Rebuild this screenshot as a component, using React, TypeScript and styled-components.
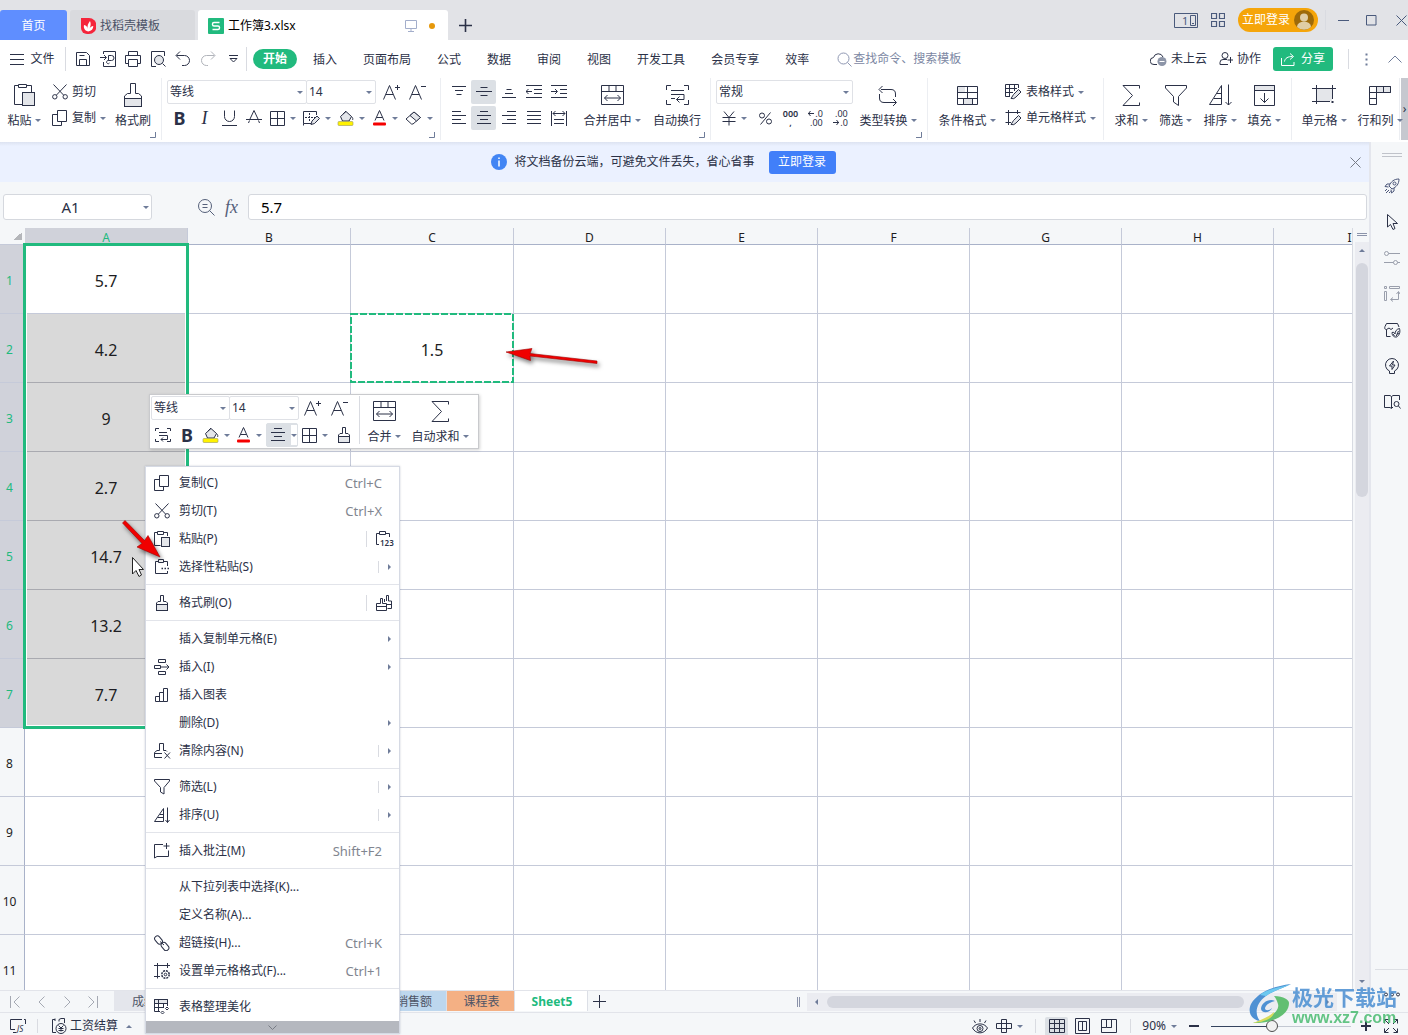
import React from "react";
import styled, { createGlobalStyle, css } from "styled-components";

const sans = '"Noto Sans", "Noto Sans CJK SC", sans-serif';
const ink = "#2b3147";
const muted = "#6f7c99";
const green = "#21ba7e";
const panel = "#f5f7f9";
const shade = "#e4e6ea";
const line = "#e2e4ea";

const GlobalStyle = createGlobalStyle`
  *, *::before, *::after { box-sizing: border-box; }
  body { margin: 0; overflow: hidden; }
  body, button, input, select {
    font: 12px/16px ${sans};
    color: ${ink};
  }
  button, input, select { margin: 0; padding: 0; border: 0; background: none; outline: 0; }
  button { display: inline-flex; align-items: center; justify-content: center; white-space: nowrap; flex: none; }
  svg { flex: none; display: block; }
`;

/* ---------- icons ---------- */

type Drawing = [number, number, React.ReactNode];

const gridLines = <path d="M.5 .5H14.5V14.5H.5ZM7.5 .5V14.5M.5 7.5H14.5" />;

const icons: Record<string, Drawing> = {
  burger: [14, 12, <path d="M0 1.5H14M0 6.5H14M0 11.5H14" />],
  save: [16, 16, <path d="M1.5 1.5H11.5L14.5 4.5V14.5H1.5ZM4.5 14.5V8.5H11.5V14.5M4.5 4.5H9.5" />],
  exportPdf: [16, 16, <path d="M3.5 3V.5H15.5V15.5H3.5V11M0 6.5H6M4 4L6.5 6.5L4 9M8.5 4.5H11.5A2 2 0 0 1 11.5 9.5H8.5ZM8.5 9.5A1.6 1.6 0 1 0 9.5 12" />],
  print: [16, 16, <path d="M3.5 4V.5H12.5V4M3.5 12.5H.5V4.5H15.5V12.5H12.5M3.5 8.5H12.5V15.5H3.5Z" />],
  preview: [16, 16, <><path d="M6 15.5H1.5V.5H14.5V5M12.5 12.5L15.5 15.5" /><circle cx="9" cy="9" r="4.5" fill={shade} /></>],
  undo: [16, 16, <path d="M5 .5L1 4.5L5 8.5M1.5 4.5H9.5A5 5 0 0 1 9.5 14.5H7" />],
  redo: [16, 16, <path d="M11 .5L15 4.5L11 8.5M14.5 4.5H6.5A5 5 0 0 0 6.5 14.5H8" />],
  quickMore: [9, 8, <path d="M0 .5H9M1 3.5L4.5 7L8 3.5Z" />],
  search: [15, 15, <><circle cx="6.5" cy="6.5" r="5.5" /><path d="M10.5 10.5L14.5 14.5" /></>],
  cloud: [17, 14, <><path d="M7 12.5H4A3.5 3.5 0 0 1 3.5 5.5A5 5 0 0 1 13 5" /><circle cx="12" cy="9.5" r="4.5" fill="#8d95a8" stroke="none" /><path d="M9.5 9.5H14.5" stroke="#fff" /></>],
  coop: [14, 14, <><circle cx="6" cy="3.5" r="3" /><path d="M8 7.5H4A3 3 0 0 0 1 10.5V12.5H9M11.5 5V11M8.5 8H14" /></>],
  share: [14, 13, <path d="M.5 5V12.5H13V9M3.5 8.5C4 5 7 3.5 11.5 3.5M9 .5L12.5 3.5L9 6.5" />],
  kebab: [3, 13, <path d="M1.5 .5V2.5M1.5 5.5V7.5M1.5 10.5V12.5" strokeWidth="2" />],
  chevronUp: [14, 8, <path d="M.5 7.5L7 1L13.5 7.5" />],
  windowOne: [24, 15, <><path d="M.5 .5H23.5V14.5H.5ZM16.5 2.5H21.5V12.5H16.5ZM18 10.5H20" /><text x="8" y="12" fontSize="11" fill="currentColor" stroke="none">1</text></>],
  apps: [14, 14, <path d="M.5 .5H5.5V5.5H.5ZM8.5 .5H13.5V5.5H8.5ZM.5 8.5H5.5V13.5H.5ZM8.5 8.5H13.5V13.5H8.5Z" strokeWidth="1.2" />],
  avatar: [20, 20, <><circle cx="10" cy="10" r="10" fill="#9e6a09" stroke="none" /><circle cx="10" cy="7.5" r="4" fill="#e0cda6" stroke="none" /><path d="M3 17A7 5.5 0 0 1 17 17A10 10 0 0 1 3 17" fill="#e0cda6" stroke="none" /></>],
  minimize: [11, 11, <path d="M0 5.5H11" />],
  maximize: [11, 11, <path d="M.5 .5H10V10H.5Z" />],
  close: [11, 11, <path d="M.5 .5L10.5 10.5M10.5 .5L.5 10.5" />],
  plus: [13, 13, <path d="M6.5 0V13M0 6.5H13" />],
  newTab: [13, 13, <path d="M6.5 0V13M0 6.5H13" strokeWidth="1.6" />],
  monitor: [12, 12, <path d="M.5 .5H11.5V8.5H.5ZM6 8.5V11.5M3 11.5H9" />],
  docer: [15, 16, <><path d="M0 0H8A7.5 8 0 0 1 8 16H6A6 6 0 0 1 0 10Z" fill="#f5253b" stroke="none" /><path d="M7.2 13.5C3.2 12.500 2.500 9.500 3 7C5.500 7.500 6.500 9 6.800 11C6 8 7 5.500 9 3C10.200 5.500 9.800 8.500 8.200 11C9 9.200 10.500 8.200 12.300 8C12.300 11 10.500 13 7.200 13.500Z" fill="#fff" stroke="none" /></>],
  sheetLogo: [16, 16, <><rect width="16" height="16" rx="1" fill={green} stroke="none" /><path d="M11.500 4.500H6A1.500 1.500 0 0 0 4.500 6V6.500A1.500 1.500 0 0 0 6 8H10A1.500 1.500 0 0 1 11.500 9.500V10A1.500 1.500 0 0 1 10 11.500H4.500" stroke="#fff" strokeWidth="1.400" /></>],

  paste: [24, 24, <><path d="M10.5 21.5H2.500V2.500H6.500M14.500 2.500H19.500V9M6.500 1.500H14.500V4.500H6.500Z" /><rect x="10.500" y="9.500" width="12" height="13" fill={shade} /></>],
  cut: [16, 16, <><circle cx="2.8" cy="12.800" r="2.200" /><circle cx="13.200" cy="12.800" r="2.200" /><path d="M1.500 .5L11.500 11M14.500 .5L4.500 11" /></>],
  copy: [16, 16, <path d="M5.500 .5H14.500V11.500H5.500ZM5.500 4.500H.5V15.500H9.500V11.500" />],
  brushLarge: [20, 24, <><rect x="1.500" y="15.500" width="17" height="8" fill={shade} /><path d="M7.500 .5H12.500V10.500H15.500L18.500 13V23.500H1.500V13L4.500 10.500H7.500Z" /></>],
  brush: [16, 16, <><rect x="2.500" y="9.500" width="11" height="6" fill={shade} /><path d="M6.500 .5H9.500V6.500H12L13.500 8V15.500H2.500V8L4 6.500H6.500Z" /></>],
  strikeA: [16, 16, <path d="M4 9L8 .5L12 9M0 9.500H16M3.500 10.500L2.500 13M12.500 10.500L13.500 13" />],
  underline: [15, 16, <path d="M2.500 .5V6.500A5 5 0 0 0 12.500 6.500V.5M0 15.500H15" />],
  borders: [15, 15, gridLines],
  cellPen: [17, 15, <><path d="M8 12.500H.5V.5H13.500V4M.5 12.500V14.500" /><path d="M2 6.500H12M6.500 2V11" strokeDasharray="2 1" /><path d="M8 13.500L9 10L14 5L16.500 7.500L11.500 12.500Z" fill={shade} /></>],
  fill: [17, 16, <><path d="M3.500 6.500L9 1.500L14.500 6.500L12 11H5.500ZM6 4L9 1" fill={shade} /><path d="M14.500 6.500C16 8 16 9 15.500 10" /><rect x="1" y="11.500" width="15" height="4" rx="1" fill="#fff200" stroke="#9a9a5a" strokeWidth=".6" /></>],
  fontColor: [15, 16, <><path d="M3 10.500L7.500 .5L12 10.500M4.500 7.500H10.500" /><rect x="1" y="12.500" width="13" height="3" rx="1" fill="#f50000" stroke="none" /></>],
  eraser: [17, 14, <><path d="M1 8L9 1L15.500 6.500L8 13H6.500Z" /><path d="M5 4.500L11.500 10L15.500 6.500L9 1Z" fill={shade} /></>],
  growA: [17, 16, <path d="M.5 15.500L6.500 1.500L12.500 15.500M3 10.500H10M12 3.500H17M14.500 1V6" />],
  shrinkA: [17, 16, <path d="M.5 15.500L6.500 1.500L12.500 15.500M3 10.500H10M12 2.500H17" />],

  alignTop: [14, 12, <path d="M0 .5H14M3 4.500H11M4.500 8.500H9.500" />],
  alignMiddle: [16, 12, <path d="M4.500 1.500H11.500M0 5.500H16M4.500 9.500H11.500" />],
  alignBottom: [14, 12, <path d="M4.500 3.500H9.500M3 7.500H11M0 11.500H14" />],
  outdent: [16, 14, <path d="M0 .5H16M8 4.500H16M8 8.500H16M0 12.500H16M0 6.500H6M2.500 4L0 6.500L2.500 9" />],
  indent: [16, 14, <path d="M0 .5H16M9 4.500H16M9 8.500H16M0 12.500H16M0 6.500H6M4 4L6.500 6.500L4 9" />],
  alignLeft: [14, 14, <path d="M0 .5H9M0 4.500H14M0 8.500H9M0 12.500H14" />],
  alignCenter: [14, 14, <path d="M3 .5H11M0 4.500H14M3 8.500H11M0 12.500H14" />],
  alignRight: [14, 14, <path d="M5 .5H14M0 4.500H14M5 8.500H14M0 12.500H14" />],
  justify: [14, 14, <path d="M0 .5H14M0 4.500H14M0 8.500H14M0 12.500H14" />],
  distribute: [16, 15, <path d="M.5 0V15M15.500 0V15M2 2.500H14M4.500 0L2 2.500L4.500 5M11.500 0L14 2.500L11.500 5M3 8.500H13M3 12.500H13" />],
  merge: [23, 20, <path d="M.5 .5H22.500V19.500H.5ZM.5 6.500H22.500M8 .5V6.500M15 .5V6.500M3.500 13H19.500M6.500 10L3.500 13L6.500 16M16.500 10L19.500 13L16.500 16" />],
  wrap: [23, 20, <path d="M5 .5H.5V5M18 .5H22.500V5M.5 15V19.500H5M22.500 15V19.500H18M5 5.500H18M5 9.500H18M5 13.500H9M18 9.500V14.500H10.500M13.500 11.500L10.500 14.500L13.500 17.500" />],
  wrapSmall: [16, 16, <path d="M4 1.500H.5V4M12 1.500H15.500V4M.5 12V14.500H4M15.500 12V14.500H12M4 5.500H12M4 8.500H12.500V12.500H6M8 10.500L6 12.500L8 14.500" />],
  yen: [14, 15, <path d="M2 .5L7 6.500L12 .5M7 6.500V14.500M.5 6.500H13.500M.5 10.500H13.500" />],
  percent: [13, 13, <><circle cx="3" cy="3.500" r="2.500" /><circle cx="10" cy="9.500" r="2.500" /><path d="M11.500 .5L1.500 12.500" /></>],
  arrowLeft: [6, 5, <path d="M0 2.500H6M2.500 0L.5 2.500L2.500 5" />],
  arrowRight: [6, 5, <path d="M0 2.500H6M3.500 0L5.500 2.500L3.500 5" />],
  convert: [20, 21, <path d="M3 4.500H13C16 4.500 17.500 6 17.500 9V12M4.500 1L1 4.500L4.500 8M1.500 9V13C1.500 16 3 17.500 6 17.500H18M15 14L18.500 17.500L15 21" />],
  conditional: [21, 19, <><path d="M.5 .5H8V6H.5ZM6.500 12.500H15V18.500H6.500Z" fill={shade} stroke="none" /><path d="M.5 .5H20.500V18.500H.5ZM.5 6.500H20.500M.5 12.500H20.500M10.500 .5V6.500M10.500 6.500V12.500M6.500 12.500V18.500M15.500 12.500V18.500" /></>],
  tablePen: [17, 16, <><path d="M5 12.500H.5V.5H13.500V4M.5 4.500H12M.5 8.500H8M4.500 .5V12M9.500 .5V7" /><path d="M6 14.500L8.500 10.500L13.500 5.500L16 8L11 13Q9 15.500 6 14.500Z" fill={shade} /></>],
  cellPenFrame: [17, 16, <><path d="M.5 2.500H15.500M3.500 0V15M.5 12.500H6M12.500 0V4" /><path d="M6 14.500L8.500 10.500L13.500 5.500L16 8L11 13Q9 15.500 6 14.500Z" fill={shade} /></>],
  sigma: [18, 21, <path d="M17.500 3.500V.5H1L10.500 10.500L1 20.500H17.500V17.500" />],
  funnel: [22, 21, <path d="M.5 .5H21.500V3L13.500 11.500V20.500L8.500 17V11.500L.5 3Z" />],
  sort: [23, 22, <path d="M.5 20.500L12.500 1.500V20.500ZM8 9.500H12.500M5 14.500H12.500M19.500 .5V21M16.500 18L19.500 21L22.500 18" />],
  fillDown: [21, 21, <><path d="M.5 .5H20.500V5.500H.5Z" fill={shade} /><path d="M.5 .5H20.500V20.500H.5ZM10.500 8V17.500M6.500 13.500L10.500 17.500L14.500 13.500" /></>],
  cell: [24, 20, <><rect x="4" y="3" width="16" height="13" fill={shade} stroke="none" /><path d="M0 3.500H24M0 16.500H18M4.500 0V19M20.500 0V14" /><path d="M20.500 16V18" strokeWidth="2" /></>],
  rowsCols: [22, 19, <><path d="M7.500 .5H21.500V6.500H7.500Z" fill={shade} /><path d="M.5 .5H21.500V6.500H7.500V18.500H.5ZM.5 6.500H7.500V.5M14.500 .5V6.500M.5 12.500H7.500" /></>],
  launcher: [6, 6, <path d="M5.500 0V5.500H0" />],

  zoomText: [17, 17, <><circle cx="7" cy="7" r="6.500" /><path d="M11.500 11.500L16.500 16.500M4.500 5.500H9.500M4.500 8.500H9.500" /></>],
  info: [16, 16, <><circle cx="8" cy="8" r="8" fill="#4285f4" stroke="none" /><path d="M8 3.500V5M8 6.500V12.500" stroke="#fff" strokeWidth="1.500" /></>],

  pasteMenu: [16, 16, <><path d="M6.500 14.500H.5V1.500H3.500M9.500 1.500H13.500V5M3.500 .5H9.500V3.500H3.500Z" /><rect x="7.500" y="6.500" width="8" height="9" fill={shade} /></>],
  pasteSpecial: [16, 16, <><path d="M13.500 12V14.500H1.500V2.500H4M10 2.500H13.500V7M4.500 .5H9.500V3.500H4.500Z" /><path d="M7.500 9.500H9M10.500 9.500H12M13.500 9.500H15" strokeWidth="1.500" /></>],
  paste123: [18, 16, <><path d="M3 13.500H.5V2.500H3M10 2.500H13.500V6M3.500 .5H9.500V3.500H3.500Z" /><text x="4" y="14.500" fontSize="8" fontWeight="600" fill="currentColor" stroke="none">123</text></>],
  twoBrushes: [16, 16, <path d="M8.500 4V7M10.500 6V.5H12.500V6H15.500V13.500H11.500M4.500 8.500V3.500H6.500V8.500H10.500V15.500H.5V8.500ZM.5 11.500H10.500M11 9.500H15.500" />],
  insertCells: [16, 16, <path d="M4.500 .5H11.500V3.500H4.500ZM4.500 12.500H11.500V15.500H4.500ZM.5 6.500H6.500V9.500H.5ZM6.500 8H15M12.500 5.500L15 8L12.500 10.500" />],
  chart: [14, 14, <path d="M.5 8.500H4.500V13.500H.5ZM4.500 4.500H8.500V13.500H4.500ZM8.500 .5H12.500V13.500H8.500Z" />],
  clear: [17, 16, <path d="M8 14.500H.5V9.500L3 7.500H5.500V.5H9.500V7.500H12L13 8.500M.5 10.500H8M10.500 9.500L16 15.500M16 9.500L10.500 15.500" />],
  filterMenu: [16, 16, <path d="M.5 .5H15.500V2L10 8.500V15L6.500 13V8.500L.5 2Z" />],
  sortMenu: [16, 16, <path d="M.5 14.500L9.500 1.500V14.500ZM6 7.500H9.500M3.500 10.500H9.500M13.500 .5V15.500M11.500 13L13.500 15.500L15.500 13" />],
  note: [16, 16, <path d="M9 1.500H.5V15L3 13.500H14.500V7.500M12.500 0V6M9.500 3H15.500" />],
  link: [16, 16, <><rect x="-4.500" y="-2.700" width="9" height="5.400" rx="2.700" transform="translate(4.500 5) rotate(50)" /><rect x="-4.500" y="-2.700" width="9" height="5.400" rx="2.700" transform="translate(11 11.500) rotate(50)" /><path d="M6 6.500L10 10" /></>],
  cellGear: [16, 16, <><path d="M0 2.500H16M0 13.500H6M3.500 0V15.500M13.500 0V5" /><circle cx="11.500" cy="11.500" r="3.700" strokeDasharray="2 .9" strokeWidth="1.500" /><circle cx="11.500" cy="11.500" r="1.300" /></>],
  tableMagic: [16, 16, <><path d="M.5 .5H13.500V4.500H.5Z" fill={shade} /><path d="M6 12.500H.5V.5H13.500V7M.5 8.500H10M4.500 .5V12.500M9.500 4.500V8.500M13 8L14.500 9.500L13 11L11.500 9.500ZM8.500 12L10 13.500L8.500 15L7 13.500Z" /></>],
  chevronDown: [9, 5, <path d="M.5 .5L4.500 4.500L8.500 .5" />],

  rocket: [16, 16, <><path d="M5 8C7 3.500 10 1 15 1C15 6 12.500 9 8 11ZM6 6H3L1 8.500L4.500 9M10 10V13L7.500 15L7 11.500M3 11L1 13M5 12L2 15M6.500 13.500L5 15" /><circle cx="10.500" cy="5.500" r="1.500" /></>],
  pointer: [14, 16, <path d="M2.500 .5V13L5.500 10.500L8 15.500L10 14.500L8 9.500H12.500Z" />],
  sliders: [16, 14, <><circle cx="2.500" cy="2.500" r="2" /><circle cx="11.500" cy="11.500" r="2" /><path d="M4.500 2.500H16M0 11.500H9.500M13.500 11.500H16" /></>],
  reorder: [16, 16, <path d="M.5 .5H2.500V2.500H.5ZM5.500 .5H15.500V2.500H5.500ZM.5 5.500H2.500V14.500H.5ZM14.500 6V13.500H7M12.500 8L14.500 5.500L16 8M9 11.500L6.500 13.500L9 15.500" />],
  shop: [17, 16, <><path d="M6.500 14.500H2.500V7.500C.5 7.500 .5 6 1 4.500L2.500 1.500H13.500L15 5M2.500 7.500L5 6L7 7.500L9 6" /><path d="M8 10.500C9.500 10 10.500 10.500 11 12C11 9.500 12.500 7 15.500 6.500C16.500 10 15.500 13.500 12.500 15C10 15.500 8 13.500 8 10.500ZM12 14.500L14.500 9M10.500 14L9 12M13 12L15.500 11.500" /></>],
  bulb: [16, 16, <path d="M5.500 13A6.500 6.500 0 1 1 10.500 13V15.500H5.500ZM9.500 3L5.500 8H8V11.500L11 7H8.500Z" />],
  book: [17, 14, <><path d="M9 12L7.500 13.500L6 12.500H.5V.5H6L7.500 1.500L9 .5H15.500V5M7.500 1.500V13" /><circle cx="12.500" cy="9" r="2.500" /><path d="M14.500 11L16.500 13.500" /></>],
  dots: [16, 5, <><circle cx="2" cy="2.500" r="1.500" /><circle cx="8" cy="2.500" r="1.500" /><circle cx="14" cy="2.500" r="1.500" /></>],
  grip: [20, 5, <path d="M0 .5H20M0 3.500H20" />],
  splitH: [10, 4, <path d="M0 .5H10M0 2.500H10" />],
  splitV: [4, 10, <path d="M.5 0V10M2.500 0V10" />],

  first: [10, 12, <path d="M.5 0V12M9.500 .5L4 6L9.500 11.500" />],
  prev: [7, 12, <path d="M6.500 .5L1 6L6.500 11.500" />],
  next: [7, 12, <path d="M.5 .5L6 6L.5 11.500" />],
  last: [10, 12, <path d="M.5 .5L6 6L.5 11.500M9.500 0V12" />],
  script: [18, 16, <><path d="M5 11.500H.5V1.500H12M14 1.500H15.500V6M3 14.500H6" /><text x="7" y="13.500" fontSize="8" fontStyle="italic" fill="currentColor" stroke="none">JS</text></>],
  salary: [16, 16, <><path d="M5 14.500H1.500V1.500H4M8 3.500V1.500L10 .5H13.500V5M4 .5V3" /><circle cx="10" cy="10.500" r="5" /><path d="M7.500 7.500L10 10L12.500 7.500M10 10V13.500M7.500 10.500H12.500M7.500 12.500H12.500" /></>],
  eye: [16, 15, <><path d="M.5 9C4 3.500 12 3.500 15.500 9C12 15.500 4 15.500 .5 9ZM8 0V3M2 1.500L3.500 4M14 1.500L12.500 4" /><circle cx="8" cy="9.500" r="3" /><circle cx="8" cy="9.500" r="1" /></>],
  cross: [16, 14, <path d="M5.500 .5H10.500V13.500H5.500ZM.5 4.500H15.500V9.500H.5Z" />],
  viewGrid: [16, 14, <path d="M.5 .5H15.500V13.500H.5ZM.5 4.500H15.500M.5 9.500H15.500M5.500 .5V13.500M10.500 .5V13.500" />],
  viewPage: [15, 16, <path d="M.5 .5H14.500V15.500H.5ZM3.500 3.500H11.500V12.500H3.500ZM7.500 3.500V12.500" />],
  viewBreak: [16, 14, <path d="M.5 .5H15.500V13.500H.5ZM5.500 .5V8.500H10.500V.5M.5 8.500H5.500M10.500 5.500V8.500" />],
  minusBold: [10, 10, <path d="M0 5H10" strokeWidth="2" />],
  plusBold: [10, 10, <path d="M0 5H10M5 0V10" strokeWidth="2" />],
  fullscreen: [14, 14, <path d="M4.500 .5H.5V4.500M.5 .5L5 5M9.500 .5H13.500V4.500M13.500 .5L9 5M.5 9.500V13.500H4.500M.5 13.500L5 9M13.500 9.500V13.500H9.500M13.500 13.500L9 9" />],
};

const Svg = styled.svg`
  fill: none;
  stroke: currentColor;
  font-family: ${sans};
`;

function Icon({ name }: { name: string }) {
  const [w, h, body] = icons[name];
  return (
    <Svg width={w} height={h} viewBox={`0 0 ${w} ${h}`} aria-hidden="true">
      {body}
    </Svg>
  );
}

type Dir = "down" | "up" | "left" | "right";
const Caret = styled.i<{ $dir?: Dir }>`
  flex: none;
  display: block;
  width: 0;
  height: 0;
  border: 3px solid transparent;
  ${({ $dir = "down" }) =>
    ({
      down: css`border-top-color: ${muted}; border-bottom-width: 0;`,
      up: css`border-bottom-color: ${muted}; border-top-width: 0;`,
      left: css`border-right-color: ${muted}; border-left-width: 0;`,
      right: css`border-left-color: ${muted}; border-right-width: 0;`,
    })[$dir]}
`;

const Rule = styled.span<{ $h?: number; $space?: number }>`
  flex: none;
  width: 1px;
  height: ${({ $h = 20 }) => $h}px;
  margin: 0 ${({ $space = 0 }) => $space}px;
  background: #d9dbe1;
`;

const Spacer = styled.span`
  flex: 1;
`;

const IconButton = styled.button<{ $w?: number; $h?: number; $tint?: string; $active?: boolean }>`
  width: ${({ $w = 25 }) => $w}px;
  height: ${({ $h = 24 }) => $h}px;
  gap: 5px;
  color: ${({ $tint = ink }) => $tint};
  ${({ $active }) => $active && css`background: #dce0e5; border-radius: 2px;`}
`;

/* ---------- window title ---------- */

const Page = styled.div`
  position: relative;
  display: flex;
  flex-direction: column;
  height: 100vh;
  overflow: hidden;
  background: ${panel};
`;

const TitleBar = styled.header`
  display: flex;
  align-items: flex-end;
  height: 40px;
  background: #e2e3e7;
`;

const DocTab = styled.button<{ $kind: "home" | "idle" | "open" }>`
  height: 30px;
  padding-top: 2px;
  gap: 4px;
  border-radius: 3px 3px 0 0;
  ${({ $kind }) => $kind === "home" && css`width: 67px; margin-right: 3px; background: #5f8eff; color: #fff;`}
  ${({ $kind }) => $kind === "idle" && css`width: 125px; margin-right: 3px; padding-left: 11px; justify-content: flex-start; background: #d9dade; color: #4b5266;`}
  ${({ $kind }) => $kind === "open" && css`width: 250px; padding-left: 10px; padding-right: 13px; justify-content: flex-start; background: #fff; color: #000;`}
`;

const TabState = styled.span`
  display: flex;
  align-items: center;
  gap: 12px;
  margin-left: auto;
  color: #a3aecb;
`;

const Unsaved = styled.i`
  width: 6px;
  height: 6px;
  border-radius: 50%;
  background: #e6980b;
`;

const WindowTools = styled.div`
  display: flex;
  align-items: center;
  height: 40px;
  padding-right: 1px;
  color: #4a5a7c;
`;

const Login = styled.button`
  width: 80px;
  height: 24px;
  margin: 0 7px;
  gap: 4px;
  border-radius: 12px;
  background: #f5a50a;
  color: #fff;
`;

/* ---------- menu ---------- */

const MenuBar = styled.nav`
  display: flex;
  align-items: center;
  height: 38px;
  background: #fff;
`;

const FileButton = styled.button`
  width: 65px;
  gap: 6px;
`;

const QuickBar = styled.div`
  display: flex;
  margin-left: 4px;
`;

const MenuTab = styled.button<{ $on?: boolean }>`
  height: 20px;
  padding: 1px 13px 0;
  ${({ $on }) => $on && css`margin: 0 3px 0 6px; padding: 0 10px; border-radius: 10px; background: ${green}; color: #fff; font-weight: 700;`}
`;

const Search = styled.label`
  display: flex;
  align-items: center;
  flex: 1;
  min-width: 0;
  gap: 1px;
  margin-left: 15px;
  color: #8f98b3;
`;

const SearchInput = styled.input`
  flex: 1;
  min-width: 0;
  &::placeholder { color: #7c87a3; opacity: 1; }
`;

const TextButton = styled.button`
  gap: 4px;
  margin-right: 12px;
`;

const ShareButton = styled.button`
  width: 60px;
  height: 24px;
  margin-right: 15px;
  gap: 6px;
  border-radius: 3px;
  background: ${green};
  color: #fff;
`;

const MenuEnd = styled.div`
  display: flex;
  align-items: center;
  padding-right: 2px;
`;

/* ---------- ribbon ---------- */

const Ribbon = styled.section`
  display: flex;
  flex: none;
  height: 64px;
  overflow: hidden;
  background: #fff;
`;

const Group = styled.div<{ $w: number; $pad?: number }>`
  position: relative;
  display: flex;
  flex: none;
  width: ${({ $w }) => $w}px;
  height: 62px;
  padding: 2px 0 0 ${({ $pad = 5 }) => $pad}px;
  border-right: 1px solid #eceef2;
`;

const Launcher = styled.button`
  position: absolute;
  right: 5px;
  bottom: 2px;
  color: ${muted};
`;

const BigButton = styled.button<{ $w: number }>`
  flex-direction: column;
  justify-content: flex-start;
  width: ${({ $w }) => $w}px;
  height: 50px;
`;

const BigIcon = styled.span`
  display: flex;
  align-items: center;
  justify-content: center;
  height: 30px;
`;

const Label = styled.span`
  display: flex;
  align-items: center;
  height: 20px;
  padding-top: 1px;
  gap: 3px;
`;

const Rows = styled.div<{ $w?: number }>`
  display: flex;
  flex-direction: column;
  gap: 2px;
  ${({ $w }) => $w && css`width: ${$w}px;`}
`;

const Row = styled.div<{ $inset?: boolean }>`
  display: flex;
  align-items: center;
  height: 24px;
  padding-left: ${({ $inset }) => ($inset ? 4 : 0)}px;
`;

const LineButton = styled.button`
  height: 24px;
  gap: 4px;
`;

const Picker = styled.label<{ $w: number }>`
  display: flex;
  align-items: center;
  flex: none;
  width: ${({ $w }) => $w}px;
  height: 24px;
  padding: 0 3px 0 2px;
  border: 1px solid #dfe1e6;
  border-radius: 2px;
  background: #fff;
  & + & { margin-left: -1px; }
  select { flex: 1; min-width: 0; appearance: none; color: inherit; }
`;

const Bold = styled.span`
  font: 700 18px/20px ${sans};
`;

const Italic = styled.span`
  font: italic 18px/20px "Liberation Serif", serif;
`;

const Digits = styled.span`
  display: grid;
  justify-items: end;
  font: 9px/9px ${sans};
  span { display: flex; align-items: center; gap: 1px; }
`;

const Thousands = styled.span`
  font: 600 9px/9px ${sans};
  text-align: center;
  white-space: pre-line;
`;

const RibbonScroll = styled.button`
  width: 7px;
  height: 62px;
  margin-left: auto;
  background: #c6c8cf;
`;

function Big({ icon, text, w, caret = true }: { icon: string; text: string; w: number; caret?: boolean }) {
  return (
    <BigButton $w={w}>
      <BigIcon><Icon name={icon} /></BigIcon>
      <Label>{text}{caret && <Caret />}</Label>
    </BigButton>
  );
}

function Tool({ icon, w, caret, active }: { icon: string; w?: number; caret?: boolean; active?: boolean }) {
  return (
    <IconButton $w={w} $active={active} aria-label={icon}>
      <Icon name={icon} />
      {caret && <Caret />}
    </IconButton>
  );
}

function Select({ label, value, w }: { label: string; value: string; w: number }) {
  return (
    <Picker $w={w}>
      <select aria-label={label}><option>{value}</option></select>
      <Caret />
    </Picker>
  );
}

/* ---------- workspace ---------- */

const Workspace = styled.main`
  display: flex;
  flex: 1;
  min-height: 0;
`;

const Main = styled.div`
  display: flex;
  flex-direction: column;
  flex: 1;
  min-width: 0;
`;

const Notice = styled.aside`
  display: flex;
  align-items: center;
  flex: none;
  height: 40px;
  padding-right: 4px;
  background: linear-gradient(#dde3f1, #ebf1ff 4px);
`;

const NoticeText = styled.p`
  display: flex;
  align-items: center;
  justify-content: center;
  flex: 1;
  margin: 0 18px 0 0;
  gap: 7px;
`;

const NoticeButton = styled.button`
  width: 67px;
  height: 23px;
  margin-left: 7px;
  border-radius: 3px;
  background: #417ff9;
  color: #fff;
`;

const FormulaBar = styled.div`
  display: flex;
  align-items: center;
  flex: none;
  height: 46px;
  padding: 4px 2px 0 3px;
  color: #55607a;
`;

const NameBox = styled.label`
  display: flex;
  align-items: center;
  width: 149px;
  height: 26px;
  margin-right: 46px;
  padding-right: 2px;
  border: 1px solid #d5d8de;
  border-radius: 3px;
  background: #fff;
  input { flex: 1; min-width: 0; padding-right: 6px; text-align: center; font-size: 15px; }
`;

const FormulaInput = styled.input`
  && {
    flex: 1;
    height: 26px;
    padding-left: 12px;
    border: 1px solid #d5d8de;
    border-radius: 3px;
    background: #fff;
    font-size: 15px;
    color: #000;
  }
`;

const Fx = styled.span`
  width: 33px;
  text-align: center;
  font: italic 18px/20px "Liberation Serif", serif;
`;

const SheetArea = styled.div`
  display: flex;
  flex: 1;
  min-height: 0;
`;

const SheetView = styled.div`
  position: relative;
  flex: 1;
  min-width: 0;
  overflow: hidden;
`;

const Table = styled.table`
  width: 1426px;
  table-layout: fixed;
  border-collapse: separate;
  border-spacing: 0;
  color: #1d1d22;
`;

const grid = "#c5cad9";

const Corner = styled.th`
  width: 25px;
  height: 17px;
  padding: 0 3px 0 0;
  border-bottom: 1px solid ${grid};
  i {
    display: block;
    margin-left: auto;
    width: 8px;
    height: 8px;
    background: linear-gradient(135deg, transparent 50%, #b4b6ba 50%);
  }
`;

const ColHead = styled.th<{ $on?: boolean; $w: number }>`
  width: ${({ $w }) => $w}px;
  height: 17px;
  padding: 3px 0 0;
  border-right: 1px solid ${grid};
  border-bottom: 1px solid #a9b2c9;
  font-weight: 400;
  line-height: 13px;
  background: ${({ $on }) => ($on ? "#d0d2da" : panel)};
  color: ${({ $on }) => ($on ? green : "inherit")};
`;

const RowHead = styled.th<{ $on?: boolean }>`
  height: 69px;
  padding: 3px 5px 0 0;
  border-right: 1px solid #a9b2c9;
  border-bottom: 1px solid ${grid};
  font-weight: 400;
  background: ${({ $on }) => ($on ? "#d0d2da" : panel)};
  color: ${({ $on }) => ($on ? green : "inherit")};
`;

const Cell = styled.td<{ $on?: boolean }>`
  padding: 3px 0 0;
  border-right: 1px solid ${grid};
  border-bottom: 1px solid ${({ $on }) => ($on ? "#a9aab0" : grid)};
  background: ${({ $on }) => ($on ? "#d9d9d9" : "#fff")};
  text-align: center;
  font-size: 16px;
  line-height: 20px;
`;

const Selection = styled.div`
  position: absolute;
  left: 23px;
  top: 15px;
  width: 166px;
  height: 486px;
  border: 3px solid ${green};
  box-shadow: inset 0 0 0 1px #fff;
`;

const CopyMark = styled.svg`
  position: absolute;
  left: 350px;
  top: 85px;
  fill: none;
  stroke: ${green};
  stroke-width: 2;
  stroke-dasharray: 7 2;
`;

const VScroll = styled.div`
  display: flex;
  flex-direction: column;
  align-items: center;
  width: 17px;
  border-left: 1px solid #d8dbe2;
  padding-left: 2px;
  color: #8b93aa;
`;

const VSplit = styled.span`
  display: flex;
  align-items: center;
  height: 14px;
`;

const VTrack = styled.div`
  display: flex;
  flex-direction: column;
  align-items: center;
  flex: 1;
  width: 14px;
  padding: 7px 0;
  background: #ebecf1;
`;

const VThumb = styled.i`
  width: 12px;
  height: 234px;
  margin: 11px 0 auto;
  border-radius: 6px;
  background: #d4d6de;
`;

const TabStrip = styled.div`
  display: flex;
  flex: none;
  height: 22px;
  border-top: 1px solid ${line};
`;

const TabNav = styled.div`
  display: flex;
  align-items: center;
  width: 114px;
  padding-left: 2px;
`;

const SheetTab = styled.button<{ $w: number; $bg: string; $on?: boolean }>`
  width: ${({ $w }) => $w}px;
  height: 20px;
  padding: 2px 0 0 2px;
  border-right: 1px solid #dcdfe6;
  background: ${({ $bg }) => $bg};
  color: #4f5567;
  ${({ $w }) => $w > 200 && css`justify-content: flex-start; padding-left: 18px;`}
  ${({ $on }) => $on && css`color: ${green}; font-weight: 700;`}
`;

const HScroll = styled.div`
  display: flex;
  align-items: center;
  width: 547px;
  margin-right: 25px;
  color: #8b93aa;
`;

const HTrack = styled.div`
  display: flex;
  align-items: center;
  flex: 1;
  height: 18px;
  margin: 0 6px;
  padding: 0 8px;
  background: #ebecf1;
`;

const HThumb = styled.i`
  width: 417px;
  height: 12px;
  margin: 0 auto 0 9px;
  border-radius: 6px;
  background: #d4d6de;
`;

const SidePane = styled.aside`
  display: flex;
  flex-direction: column;
  align-items: center;
  flex: none;
  width: 39px;
  padding: 11px 0 0 5px;
  border-left: 2px solid #e4e6ed;
`;

const SideGrip = styled.span`
  height: 15px;
  color: #c0c3ca;
`;

const SideFoot = styled.div`
  display: flex;
  align-items: center;
  justify-content: center;
  width: 35px;
  height: 43px;
  margin-top: auto;
  padding-top: 6px;
  border-top: 1px solid #dcdfe4;
`;

const StatusBar = styled.footer`
  display: flex;
  align-items: center;
  flex: none;
  height: 23px;
  padding: 4px 3px 0 6px;
  border-top: 1px solid ${line};
`;

const Payroll = styled.button`
  gap: 3px;
  margin-left: 8px;
  i { margin-left: 5px; }
`;

const ZoomValue = styled.button`
  gap: 5px;
  margin: 0 6px 0 3px;
`;

const ZoomRange = styled.input`
  width: 140px;
  height: 14px;
  margin: 0 4px 0 6px;
  appearance: none;
  &::-webkit-slider-runnable-track {
    height: 1px;
    background: linear-gradient(90deg, #34435e 45%, #c3c8d2 45%);
  }
  &::-webkit-slider-thumb {
    appearance: none;
    width: 12px;
    height: 12px;
    margin-top: -6px;
    border: 1px solid #4d4d4d;
    border-radius: 50%;
    background: #f1f1f1;
  }
`;

/* ---------- floating layers ---------- */

const MiniBar = styled.div`
  position: absolute;
  left: 149px;
  top: 394px;
  display: flex;
  width: 330px;
  height: 55px;
  padding: 1px;
  border: 1px solid #c9cacd;
  background: #fff;
  box-shadow: 1px 1px 3px rgba(0, 0, 0, 0.18);
`;

const MiniAlign = styled.button`
  width: 32px;
  height: 24px;
  gap: 6px;
  padding-left: 4px;
  background: #dce0e5;
  border: 1px solid #dce0e5;
  border-radius: 2px;
  span { display: flex; align-items: center; justify-content: center; width: 8px; height: 20px; background: #fff; }
`;

const MiniTools = styled.div`
  display: flex;
  flex-direction: column;
  gap: 3px;
  width: 208px;
`;

const Menu = styled.ul`
  position: absolute;
  left: 145px;
  top: 466px;
  width: 255px;
  margin: 0;
  padding: 2px 0 0;
  list-style: none;
  border: 1px solid #d6dae4;
  background: #fff;
  box-shadow: 0 0 2px rgba(60, 70, 100, 0.25);
`;

const MenuItem = styled.button`
  display: flex;
  justify-content: flex-start;
  width: 100%;
  height: 28px;
`;

const MenuIcon = styled.span`
  display: flex;
  justify-content: center;
  width: 32px;
  margin-right: 1px;
`;

const Shortcut = styled.span`
  margin: 0 17px 0 auto;
  font-size: 13px;
  color: #81858f;
`;

const ItemEnd = styled.span`
  display: flex;
  align-items: center;
  margin: 0 8px 0 auto;
  gap: 9px;
`;

const ItemExtra = styled.span`
  display: flex;
  width: 18px;
  margin-right: -3px;
`;

const MenuSep = styled.li`
  height: 8px;
  border-top: 3px solid #fff;
  background: linear-gradient(${line} 1px, #fff 1px);
`;

const MenuMore = styled.button`
  display: flex;
  width: 100%;
  height: 12px;
  background: #b5b8bf;
  color: #787c85;
`;

const Annotations = styled.svg`
  position: absolute;
  left: 0;
  top: 0;
  pointer-events: none;
`;

const Arrow = styled.path`
  fill: #f00000;
  stroke: #a00000;
  stroke-width: 0.6;
  filter: drop-shadow(2px 3px 2px rgba(0, 0, 0, 0.5));
`;

const Watermark = styled.div`
  position: absolute;
  right: 11px;
  bottom: 7px;
  display: flex;
  pointer-events: none;
`;

const MarkText = styled.p`
  margin: 0;
  color: #4f91d3;
  font: 700 21px/24px "Noto Sans CJK SC", sans-serif;
  opacity: 0.88;
  small {
    display: block;
    color: #4fbd75;
    font: 700 16px/20px "Liberation Sans", sans-serif;
  }
`;

/* ---------- data ---------- */

const columns: [string, number][] = [
  ["A", 163], ["B", 163], ["C", 163], ["D", 152], ["E", 152],
  ["F", 152], ["G", 152], ["H", 152], ["I", 152],
];
const rowCount = 11;
const selectedRows = 7;
const values: Record<string, string> = {
  A1: "5.7", A2: "4.2", A3: "9", A4: "2.7", A5: "14.7", A6: "13.2", A7: "7.7", C2: "1.5",
};

type Item = { icon?: string; text: string; keys?: string; sub?: boolean; bar?: boolean; extra?: string };
const menu: (Item | null)[] = [
  { icon: "copy", text: "复制(C)", keys: "Ctrl+C" },
  { icon: "cut", text: "剪切(T)", keys: "Ctrl+X" },
  { icon: "pasteMenu", text: "粘贴(P)", extra: "paste123" },
  { icon: "pasteSpecial", text: "选择性粘贴(S)", sub: true, bar: true },
  null,
  { icon: "brush", text: "格式刷(O)", extra: "twoBrushes" },
  null,
  { text: "插入复制单元格(E)", sub: true },
  { icon: "insertCells", text: "插入(I)", sub: true },
  { icon: "chart", text: "插入图表" },
  { text: "删除(D)", sub: true },
  { icon: "clear", text: "清除内容(N)", sub: true, bar: true },
  null,
  { icon: "filterMenu", text: "筛选(L)", sub: true, bar: true },
  { icon: "sortMenu", text: "排序(U)", sub: true, bar: true },
  null,
  { icon: "note", text: "插入批注(M)", keys: "Shift+F2" },
  null,
  { text: "从下拉列表中选择(K)..." },
  { text: "定义名称(A)..." },
  { icon: "link", text: "超链接(H)...", keys: "Ctrl+K" },
  { icon: "cellGear", text: "设置单元格格式(F)...", keys: "Ctrl+1" },
  null,
  { icon: "tableMagic", text: "表格整理美化" },
];

const menuTabs = ["插入", "页面布局", "公式", "数据", "审阅", "视图", "开发工具", "会员专享", "效率"];
const sideIcons: [string, string][] = [
  ["rocket", "#4a5578"], ["pointer", ink], ["sliders", "#9a9fac"], ["reorder", "#9a9fac"],
  ["shop", ink], ["bulb", ink], ["book", ink],
];

/* ---------- sections ---------- */

function Title() {
  return (
    <TitleBar>
      <DocTab $kind="home">首页</DocTab>
      <DocTab $kind="idle"><Icon name="docer" />找稻壳模板</DocTab>
      <DocTab $kind="open">
        <Icon name="sheetLogo" />工作簿3.xlsx
        <TabState><Icon name="monitor" /><Unsaved /></TabState>
      </DocTab>
      <IconButton $w={35} $h={30} aria-label="新建"><Icon name="newTab" /></IconButton>
      <Spacer />
      <WindowTools>
        <IconButton $w={38} $tint="#4a5a7c" aria-label="窗口"><Icon name="windowOne" /></IconButton>
        <IconButton $w={26} $tint="#4a5a7c" aria-label="应用"><Icon name="apps" /></IconButton>
        <Login>立即登录<Icon name="avatar" /></Login>
        <Rule />
        <IconButton $w={34} $tint="#4a5a7c" aria-label="最小化"><Icon name="minimize" /></IconButton>
        <IconButton $w={22} $tint="#4a5a7c" aria-label="最大化"><Icon name="maximize" /></IconButton>
        <IconButton $w={25} $tint="#4a5a7c" aria-label="关闭"><Spacer /><Icon name="close" /></IconButton>
      </WindowTools>
    </TitleBar>
  );
}

function Menus() {
  return (
    <MenuBar>
      <FileButton><Icon name="burger" />文件</FileButton>
      <Rule $h={24} />
      <QuickBar>
        {["save", "exportPdf", "print", "preview", "undo"].map((n) => <Tool key={n} icon={n} />)}
        <IconButton $w={26} $tint="#b0b3ba" aria-label="重做"><Icon name="redo" /></IconButton>
        <Tool icon="quickMore" />
      </QuickBar>
      <Rule $h={24} />
      <MenuTab $on>开始</MenuTab>
      {menuTabs.map((t) => <MenuTab key={t}>{t}</MenuTab>)}
      <Search><Icon name="search" /><SearchInput aria-label="查找命令" placeholder="查找命令、搜索模板" /></Search>
      <TextButton><Icon name="cloud" />未上云</TextButton>
      <TextButton><Icon name="coop" />协作</TextButton>
      <ShareButton><Icon name="share" />分享</ShareButton>
      <Rule />
      <MenuEnd>
        <IconButton $w={34} $tint={muted} aria-label="更多"><Icon name="kebab" /></IconButton>
        <IconButton $w={23} $tint={muted} aria-label="收起"><Icon name="chevronUp" /></IconButton>
      </MenuEnd>
    </MenuBar>
  );
}

function MoreSettings() {
  return <Launcher aria-label="更多设置"><Icon name="launcher" /></Launcher>;
}

function Tools() {
  return (
    <Ribbon>
      <Group $w={162} $pad={0}>
        <Big icon="paste" text="粘贴" w={48} />
        <Rows $w={62}>
          <Row $inset><LineButton><Icon name="cut" />剪切</LineButton></Row>
          <Row $inset><LineButton><Icon name="copy" />复制<Caret /></LineButton></Row>
        </Rows>
        <Big icon="brushLarge" text="格式刷" w={46} caret={false} />
        <MoreSettings />
      </Group>
      <Group $w={279}>
        <Rows>
          <Row>
            <Select label="字体" value="等线" w={140} />
            <Select label="字号" value="14" w={70} />
            <Tool icon="growA" w={31} />
            <Tool icon="shrinkA" w={20} />
          </Row>
          <Row>
            <IconButton aria-label="加粗"><Bold>B</Bold></IconButton>
            <IconButton aria-label="倾斜"><Italic>I</Italic></IconButton>
            <Tool icon="underline" w={24} />
            <Tool icon="strikeA" />
            <Tool icon="borders" w={34} caret />
            <Tool icon="cellPen" w={34} caret />
            <Tool icon="fill" w={34} caret />
            <Tool icon="fontColor" w={34} caret />
            <Tool icon="eraser" w={34} caret />
          </Row>
        </Rows>
        <MoreSettings />
      </Group>
      <Group $w={270}>
        <Rows $w={130}>
          <Row>
            <Tool icon="alignTop" />
            <Tool icon="alignMiddle" active />
            <Tool icon="alignBottom" />
            <Tool icon="outdent" />
            <Tool icon="indent" />
          </Row>
          <Row>
            <Tool icon="alignLeft" />
            <Tool icon="alignCenter" active />
            <Tool icon="alignRight" />
            <Tool icon="justify" />
            <Tool icon="distribute" />
          </Row>
        </Rows>
        <Big icon="merge" text="合并居中" w={72} />
        <Big icon="wrap" text="自动换行" w={58} caret={false} />
        <MoreSettings />
      </Group>
      <Group $w={217}>
        <Rows $w={138}>
          <Row><Select label="数字格式" value="常规" w={137} /></Row>
          <Row>
            <Tool icon="yen" w={37} caret />
            <Tool icon="percent" />
            <IconButton aria-label="千位分隔"><Thousands>{"000\n,"}</Thousands></IconButton>
            <IconButton aria-label="增加小数"><Digits><span><Icon name="arrowLeft" />.0</span><span>.00</span></Digits></IconButton>
            <IconButton aria-label="减少小数"><Digits><span>.00</span><span><Icon name="arrowRight" />.0</span></Digits></IconButton>
          </Row>
        </Rows>
        <Big icon="convert" text="类型转换" w={68} />
        <MoreSettings />
      </Group>
      <Group $w={176}>
        <Big icon="conditional" text="条件格式" w={68} />
        <Rows>
          <Row $inset><LineButton><Icon name="tablePen" />表格样式<Caret /></LineButton></Row>
          <Row $inset><LineButton><Icon name="cellPenFrame" />单元格样式<Caret /></LineButton></Row>
        </Rows>
      </Group>
      <Group $w={188}>
        <Big icon="sigma" text="求和" w={44} />
        <Big icon="funnel" text="筛选" w={45} />
        <Big icon="sort" text="排序" w={44} />
        <Big icon="fillDown" text="填充" w={44} />
      </Group>
      <Group $w={108}>
        <Big icon="cell" text="单元格" w={54} />
        <Big icon="rowsCols" text="行和列" w={58} />
      </Group>
      <RibbonScroll aria-label="向右滚动">›</RibbonScroll>
    </Ribbon>
  );
}

function Sheet() {
  return (
    <SheetArea>
      <SheetView>
        <Table>
          <thead>
            <tr>
              <Corner><i /></Corner>
              {columns.map(([c, w]) => <ColHead key={c} $w={w} $on={c === "A"}>{c}</ColHead>)}
            </tr>
          </thead>
          <tbody>
            {Array.from({ length: rowCount }, (_, i) => i + 1).map((r) => (
              <tr key={r}>
                <RowHead $on={r <= selectedRows}>{r}</RowHead>
                {columns.map(([c]) => (
                  <Cell key={c} $on={c === "A" && r > 1 && r <= selectedRows}>{values[c + r]}</Cell>
                ))}
              </tr>
            ))}
          </tbody>
        </Table>
        <Selection />
        <CopyMark width="164" height="70"><rect x="1" y="1" width="162" height="68" /></CopyMark>
      </SheetView>
      <VScroll>
        <VSplit><Icon name="splitH" /></VSplit>
        <VTrack><Caret $dir="up" /><VThumb /><Caret /></VTrack>
      </VScroll>
    </SheetArea>
  );
}

function SheetTabs() {
  return (
    <TabStrip>
      <TabNav>
        {["first", "prev", "next", "last"].map((n) => (
          <IconButton key={n} $w={26} $h={20} $tint="#a5a9b3" aria-label={n}><Icon name={n} /></IconButton>
        ))}
      </TabNav>
      <SheetTab $w={266} $bg="#e4e6ec">成绩表</SheetTab>
      <SheetTab $w={67} $bg="#bdd7ee">销售额</SheetTab>
      <SheetTab $w={68} $bg="#f4b084">课程表</SheetTab>
      <SheetTab $w={73} $bg="#fff" $on>Sheet5</SheetTab>
      <IconButton $w={23} $h={20} aria-label="新建工作表"><Icon name="plus" /></IconButton>
      <Spacer />
      <HScroll>
        <Icon name="splitV" />
        <HTrack><Caret $dir="left" /><HThumb /><Caret $dir="right" /></HTrack>
        <Rule $h={10} />
      </HScroll>
    </TabStrip>
  );
}

function Status() {
  return (
    <StatusBar>
      <IconButton $w={26} $h={18} aria-label="脚本"><Icon name="script" /></IconButton>
      <Rule $h={14} $space={5} />
      <Payroll><Icon name="salary" />工资结算<Caret $dir="up" /></Payroll>
      <Spacer />
      <IconButton $w={24} $h={18} aria-label="护眼"><Icon name="eye" /></IconButton>
      <IconButton $w={34} $h={18} aria-label="阅读"><Icon name="cross" /><Caret /></IconButton>
      <Rule $h={14} $space={9} />
      <IconButton $w={23} $h={19} $active aria-label="普通视图"><Icon name="viewGrid" /></IconButton>
      <IconButton $w={28} $h={18} aria-label="页面视图"><Icon name="viewPage" /></IconButton>
      <IconButton $w={26} $h={18} aria-label="分页视图"><Icon name="viewBreak" /></IconButton>
      <Rule $h={14} $space={8} />
      <ZoomValue>90%<Caret /></ZoomValue>
      <IconButton $w={22} $h={18} aria-label="缩小"><Icon name="minusBold" /></IconButton>
      <ZoomRange type="range" min="0" max="100" defaultValue="43" aria-label="缩放" />
      <IconButton $w={22} $h={18} aria-label="放大"><Icon name="plusBold" /></IconButton>
      <IconButton $w={28} $h={18} aria-label="全屏"><Icon name="fullscreen" /></IconButton>
    </StatusBar>
  );
}

function MiniToolbar() {
  return (
    <MiniBar>
      <MiniTools>
        <Row>
          <Select label="字体" value="等线" w={79} />
          <Select label="字号" value="14" w={70} />
          <Tool icon="growA" w={26} />
          <Tool icon="shrinkA" w={28} />
        </Row>
        <Row>
          <Tool icon="wrapSmall" w={24} />
          <IconButton $w={24} aria-label="加粗"><Bold>B</Bold></IconButton>
          <Tool icon="fill" w={33} caret />
          <Tool icon="fontColor" w={34} caret />
          <MiniAlign aria-label="对齐"><Icon name="alignCenter" /><span><Caret /></span></MiniAlign>
          <Tool icon="borders" w={34} caret />
          <Tool icon="brush" w={24} />
        </Row>
      </MiniTools>
      <Rule $h={48} />
      <Big icon="merge" text="合并" w={48} />
      <Big icon="sigma" text="自动求和" w={64} />
    </MiniBar>
  );
}

function ContextMenu() {
  return (
    <Menu>
      {menu.map((m, i) =>
        m ? (
          <li key={i}>
            <MenuItem>
              <MenuIcon>{m.icon && <Icon name={m.icon} />}</MenuIcon>
              {m.text}
              {m.keys && <Shortcut>{m.keys}</Shortcut>}
              {m.extra && <ItemEnd><Rule $h={16} /><ItemExtra><Icon name={m.extra} /></ItemExtra></ItemEnd>}
              {m.sub && <ItemEnd>{m.bar && <Rule $h={12} />}<Caret $dir="right" /></ItemEnd>}
            </MenuItem>
          </li>
        ) : (
          <MenuSep key={i} role="separator" />
        )
      )}
      <li><MenuMore aria-label="更多"><Icon name="chevronDown" /></MenuMore></li>
    </Menu>
  );
}

export default function App() {
  return (
    <Page>
      <GlobalStyle />
      <Title />
      <Menus />
      <Tools />
      <Workspace>
        <Main>
          <Notice>
            <NoticeText>
              <Icon name="info" />将文档备份云端，可避免文件丢失，省心省事
              <NoticeButton>立即登录</NoticeButton>
            </NoticeText>
            <IconButton $w={20} $tint="#777c88" aria-label="关闭提示"><Icon name="close" /></IconButton>
          </Notice>
          <FormulaBar>
            <NameBox><input aria-label="名称框" defaultValue="A1" /><Caret /></NameBox>
            <Icon name="zoomText" />
            <Fx>fx</Fx>
            <FormulaInput aria-label="编辑栏" defaultValue="5.7" />
          </FormulaBar>
          <Sheet />
          <SheetTabs />
        </Main>
        <SidePane>
          <SideGrip><Icon name="grip" /></SideGrip>
          {sideIcons.map(([n, c]) => (
            <IconButton key={n} $h={36} $tint={c} aria-label={n}><Icon name={n} /></IconButton>
          ))}
          <SideFoot><Icon name="dots" /></SideFoot>
        </SidePane>
      </Workspace>
      <Status />
      <MiniToolbar />
      <ContextMenu />
      <Annotations width="700" height="620" aria-hidden="true">
        <Arrow d="M506 352L532 348.500L530 353.500L597 361V363.500L530 356L530.500 360.500Z" />
        <Arrow d="M160 557L137 547L142 543.500L122.500 523L125 520.500L144.500 540.500L148 535.500Z" />
        <path d="M132.500 557.500V574L136 570.500L139 576.500L141.500 575L139 569.500H143.500Z" fill="#fff" stroke="#222" />
      </Annotations>
      <Watermark>
        <svg width="44" height="40" viewBox="0 0 44 40" aria-hidden="true">
          <path d="M43 0C26 2 10 8 3 20C-1 29 4 36 12 37C6 30 8 19 18 12C26 6 36 4 43 0Z" fill="#4f91d3" />
          <path d="M18 12C26 6 36 4 43 0C36 3 20 4 12 11Z" fill="#6cc8ef" />
          <path d="M26 12C36 12 41 16 41 19C41 31 26 39 5 39C22 35 32 27 30 20C29 17 28 14 26 12Z" fill="#62bf72" />
          <path d="M5 39C15 35 22 32 26 28C26 34 16 38 5 39Z" fill="#d8dc5a" />
          <path d="M27 17C21 14 13 19 13 25C14 30 22 29 24 24C21 27 17 27 17 24C18 20 23 18 27 17Z" fill="#4f91d3" />
        </svg>
        <MarkText>极光下载站<small>www.xz7.com</small></MarkText>
      </Watermark>
    </Page>
  );
}
